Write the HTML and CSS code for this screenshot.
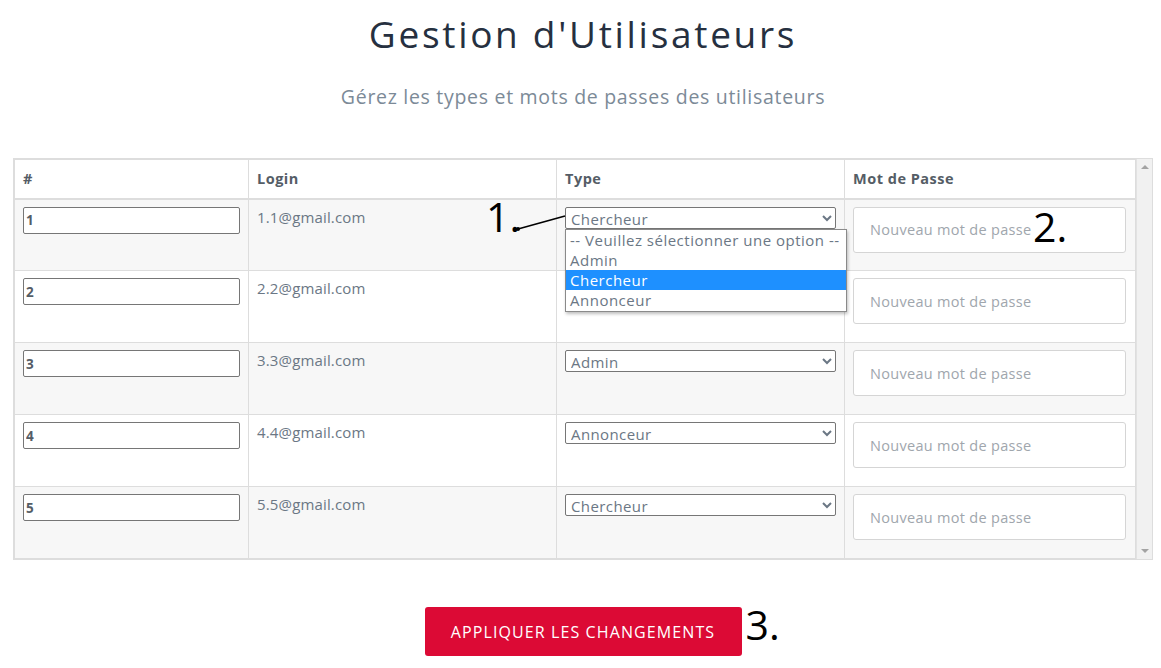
FILE: index.html
```html
<!DOCTYPE html>
<html lang="fr">
<head>
<meta charset="utf-8">
<title>Gestion d'Utilisateurs</title>
<link rel="stylesheet" href="styles.css">
</head>
<body>
<main class="page">
  <h1 class="title">Gestion d'Utilisateurs</h1>
  <p class="subtitle">Gérez les types et mots de passes des utilisateurs</p>

  <div class="table-wrap">
    <table class="users">
      <thead>
        <tr>
          <th class="c-id">#</th>
          <th class="c-login">Login</th>
          <th class="c-type">Type</th>
          <th class="c-pass">Mot de Passe</th>
        </tr>
      </thead>
      <tbody>
        <tr>
          <td><input class="id-input" type="text" value="1"></td>
          <td class="login">1.1@gmail.com</td>
          <td class="type-cell">
            <div class="select-box">
              <select class="type-select"><option>Chercheur</option></select>
              <span class="mark mark-1">1.</span>
              <svg class="pointer" width="52" height="20" viewBox="0 0 52 20"><line x1="3" y1="16" x2="50" y2="3" stroke="#000" stroke-width="1.6"/><circle cx="3" cy="16" r="2" fill="#000"/></svg>
              <ul class="dropdown">
                <li>-- Veuillez sélectionner une option --</li>
                <li>Admin</li>
                <li class="active">Chercheur</li>
                <li>Annonceur</li>
              </ul>
            </div>
          </td>
          <td class="pass-cell">
            <div class="pass-box">
              <input class="pass-input" type="password" placeholder="Nouveau mot de passe">
              <span class="mark mark-2">2.</span>
            </div>
          </td>
        </tr>
        <tr>
          <td><input class="id-input" type="text" value="2"></td>
          <td class="login">2.2@gmail.com</td>
          <td class="type-cell"></td>
          <td class="pass-cell"><input class="pass-input" type="password" placeholder="Nouveau mot de passe"></td>
        </tr>
        <tr>
          <td><input class="id-input" type="text" value="3"></td>
          <td class="login">3.3@gmail.com</td>
          <td class="type-cell"><select class="type-select"><option>Admin</option></select></td>
          <td class="pass-cell"><input class="pass-input" type="password" placeholder="Nouveau mot de passe"></td>
        </tr>
        <tr>
          <td><input class="id-input" type="text" value="4"></td>
          <td class="login">4.4@gmail.com</td>
          <td class="type-cell"><select class="type-select"><option>Annonceur</option></select></td>
          <td class="pass-cell"><input class="pass-input" type="password" placeholder="Nouveau mot de passe"></td>
        </tr>
        <tr>
          <td><input class="id-input" type="text" value="5"></td>
          <td class="login">5.5@gmail.com</td>
          <td class="type-cell"><select class="type-select"><option>Chercheur</option></select></td>
          <td class="pass-cell"><input class="pass-input" type="password" placeholder="Nouveau mot de passe"></td>
        </tr>
      </tbody>
    </table>
    <div class="scrollbar">
      <span class="arrow up"></span>
      <span class="arrow down"></span>
    </div>
  </div>

  <div class="actions">
    <div class="btn-box">
      <button class="apply" type="button">APPLIQUER LES CHANGEMENTS</button>
      <span class="mark mark-3">3.</span>
    </div>
  </div>
</main>
</body>
</html>
```

FILE: styles.css
```css
* { box-sizing: border-box; }

html, body {
  margin: 0;
  padding: 0;
  background: #fff;
}

body {
  font-family: "Open Sans", "DejaVu Sans", sans-serif;
  color: #6b7785;
}

.page {
  margin: 0 8px 0 13px;
}

.title {
  margin: 0;
  padding-top: 11px;
  text-align: center;
  font-family: "Open Sans", sans-serif;
  font-weight: 400;
  font-size: 37px;
  line-height: 46px;
  letter-spacing: 2.7px;
  color: #263040;
}

.subtitle {
  margin: 27px 0 0;
  text-align: center;
  font-size: 19.5px;
  line-height: 26px;
  font-weight: 400;
  letter-spacing: 0.7px;
  color: #7c8a97;
}

.table-wrap {
  margin-top: 48px;
  display: flex;
  width: 1140px;
  height: 402px;
  border: 1px solid #ddd;
}

.users {
  width: 1121px;
  border-collapse: collapse;
  border: 1px solid #ddd;
  table-layout: fixed;
  align-self: flex-start;
}

.c-id { width: 234px; }
.c-login { width: 308px; }
.c-type { width: 288px; }
.c-pass { width: 291px; }

.users th {
  text-align: left;
  font-weight: 700;
  font-size: 14.5px;
  letter-spacing: 0.5px;
  color: #555d66;
  padding: 7px 8px 8px;
  height: 39px;
  border-left: 1px solid #ddd;
  border-bottom: 2px solid #ddd;
  background: #fff;
}

.users td {
  vertical-align: top;
  padding: 7px 8px 8px;
  height: 72px;
  border: 1px solid #ddd;
}

.users tbody tr:nth-child(odd) td { background: #f7f7f7; }
.users tbody tr:nth-child(even) td { background: #fff; }

.id-input {
  display: block;
  width: 217px;
  height: 27px;
  border: 1px solid #767676;
  border-radius: 2px;
  padding: 1px 2px;
  font-family: "Open Sans", sans-serif;
  font-weight: 700;
  font-size: 13.5px;
  color: #555d66;
  background: #fff;
}

.login {
  font-size: 15px;
  line-height: 20px;
  letter-spacing: 0.15px;
  color: #6b7785;
}

.type-select {
  display: block;
  width: 271px;
  height: 22px;
  font-family: "Open Sans", sans-serif;
  font-size: 15px;
  letter-spacing: 0.4px;
  color: #6b7785;
  border: 1px solid #767676;
  border-radius: 2px;
  background: #fff;
  padding: 0 1px;
}

.select-box, .pass-box, .btn-box {
  position: relative;
}

.mark {
  position: absolute;
  font-family: "Open Sans", sans-serif;
  font-size: 41px;
  line-height: 1;
  color: #000;
  font-weight: 400;
  letter-spacing: 0;
}

.mark-1 { left: -79px; top: -11px; }
.mark-2 { left: 180px; top: -1px; }
.mark-3 { left: 321px; top: -3px; }

.pointer {
  position: absolute;
  left: -50px;
  top: 6px;
}

.dropdown {
  position: absolute;
  z-index: 2;
  left: 0;
  top: 22px;
  width: 282px;
  margin: 0;
  padding: 0 0 1px;
  list-style: none;
  background: #fff;
  border: 1px solid #8a8a8a;
  box-shadow: 1px 2px 3px rgba(0,0,0,0.25);
  font-size: 15px;
  line-height: 20px;
  letter-spacing: 0.5px;
  color: #6b7785;
}

.dropdown li {
  padding: 0 4px;
  white-space: nowrap;
}

.dropdown li.active {
  background: #1e90ff;
  color: #fff;
}

.pass-input {
  display: block;
  width: 273px;
  height: 46px;
  border: 1px solid #d5d5d5;
  border-radius: 3px;
  padding: 0 16px;
  font-family: "Open Sans", sans-serif;
  font-size: 14.5px;
  letter-spacing: 0.3px;
  background: #fff;
}

.pass-input::placeholder { color: #a0a6ad; }

.scrollbar {
  width: 17px;
  height: 100%;
  background: #f1f1f1;
  border-left: 1px solid #e2e2e2;
  display: flex;
  flex-direction: column;
  justify-content: space-between;
  align-items: center;
  padding: 6px 0;
}

.arrow {
  width: 0;
  height: 0;
  border-left: 4px solid transparent;
  border-right: 4px solid transparent;
}

.arrow.up { border-bottom: 4px solid #a3a3a3; }
.arrow.down { border-top: 4px solid #a3a3a3; }

.actions {
  margin-top: 47px;
  width: 1140px;
  display: flex;
  justify-content: center;
}

.apply {
  display: block;
  width: 317px;
  height: 49px;
  background: #dc0a35;
  border: none;
  border-radius: 3px;
  color: #fff;
  font-family: "Open Sans", sans-serif;
  font-size: 16px;
  letter-spacing: 1.1px;
}
```
